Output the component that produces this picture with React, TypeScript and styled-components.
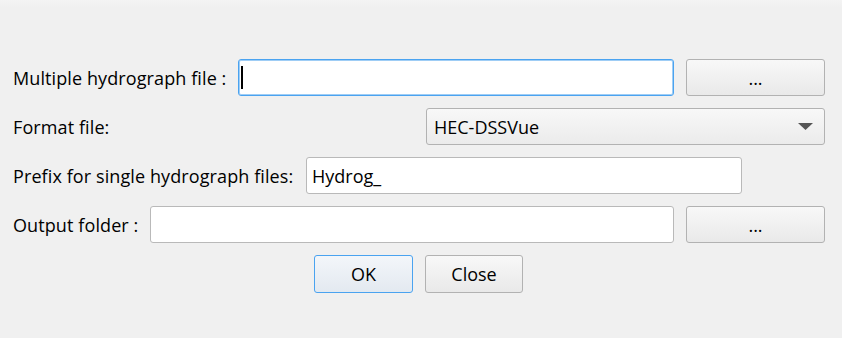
import React from "react";
import styled, { createGlobalStyle } from "styled-components";

const GlobalStyle = createGlobalStyle`
  html, body {
    margin: 0;
    padding: 0;
    background: #f0f0f0;
  }
  body {
    font-family: "Open Sans", "Noto Sans", sans-serif;
    color: #000;
  }
`;

const Dialog = styled.div`
  width: 842px;
  height: 338px;
  box-sizing: border-box;
  padding: 59px 17px 0 13px;
  background: linear-gradient(#f4f4f4 0px, #f0f0f0 8px);
  display: flex;
  flex-direction: column;
  gap: 12px;
  font-size: 18px;
`;

const Row = styled.div`
  display: flex;
  align-items: center;
  height: 37px;
`;

const Label = styled.span`
  white-space: nowrap;
  letter-spacing: 0.1px;
`;

const Fields = styled.div<{ $trail?: number }>`
  margin-left: auto;
  margin-right: ${(p) => p.$trail ?? 0}px;
  display: flex;
  gap: 12px;
  height: 100%;
`;

const LineEdit = styled.div<{ $w: number; $focus?: boolean }>`
  width: ${(p) => p.$w}px;
  height: 100%;
  box-sizing: border-box;
  background: #fff;
  border: 1px solid ${(p) => (p.$focus ? "#4aa3f0" : "#b9b9b9")};
  box-shadow: ${(p) => (p.$focus ? "inset 0 0 0 1px #9fcdf5" : "none")};
  border-radius: 3px;
  padding: 0 5px;
  display: flex;
  align-items: center;
`;

const Caret = styled.span`
  width: 2px;
  height: 23px;
  background: #000;
  margin-left: -3px;
`;

const Button = styled.button<{ $w: number; $default?: boolean }>`
  width: ${(p) => p.$w}px;
  height: 100%;
  box-sizing: border-box;
  font: inherit;
  color: #000;
  border-radius: 3px;
  border: 1px solid ${(p) => (p.$default ? "#4aa3f0" : "#b2b2b2")};
  background: ${(p) =>
    p.$default
      ? "linear-gradient(#f3f6fa, #e3e9f0)"
      : "linear-gradient(#f8f8f8, #e9e9e9)"};
  padding: 0;
  display: flex;
  align-items: center;
  justify-content: center;
`;

const Combo = styled.div`
  width: 399px;
  height: 100%;
  box-sizing: border-box;
  border: 1px solid #b2b2b2;
  border-radius: 3px;
  background: linear-gradient(#f8f8f8, #ebebeb);
  padding: 0 11px 0 7px;
  display: flex;
  align-items: center;
  justify-content: space-between;
`;

const ButtonRow = styled.div`
  display: flex;
  gap: 12px;
  height: 38px;
  padding-left: 301px;
`;

const Arrow = () => (
  <svg width="15" height="7" viewBox="0 0 15 7">
    <path d="M0 0 H15 L7.5 7 Z" fill="#555" />
  </svg>
);

export default function App() {
  return (
    <>
      <GlobalStyle />
      <Dialog>
        <Row>
          <Label>Multiple hydrograph file :</Label>
          <Fields>
            <LineEdit $w={436} $focus>
              <Caret />
            </LineEdit>
            <Button $w={139}>...</Button>
          </Fields>
        </Row>
        <Row>
          <Label>Format file:</Label>
          <Fields>
            <Combo>
              <span>HEC-DSSVue</span>
              <Arrow />
            </Combo>
          </Fields>
        </Row>
        <Row>
          <Label>Prefix for single hydrograph files:</Label>
          <Fields $trail={83}>
            <LineEdit $w={436}>Hydrog_</LineEdit>
          </Fields>
        </Row>
        <Row>
          <Label>Output folder :</Label>
          <Fields>
            <LineEdit $w={524} />
            <Button $w={139}>...</Button>
          </Fields>
        </Row>
        <ButtonRow>
          <Button $w={99} $default>
            OK
          </Button>
          <Button $w={98}>Close</Button>
        </ButtonRow>
      </Dialog>
    </>
  );
}
